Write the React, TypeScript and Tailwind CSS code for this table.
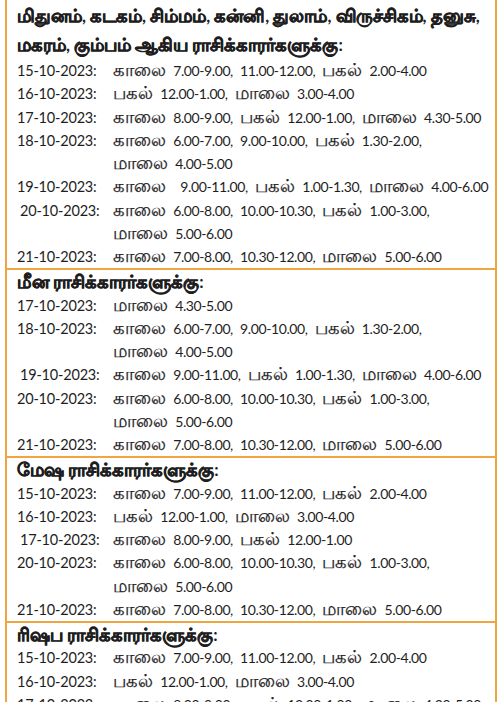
import React from 'react';

type Row = { date: string; lines: string[]; indent?: boolean };
type Section = { title: string[]; rows: Row[] };

const sections: Section[] = [
    {
        title: [
            'மிதுனம், கடகம், சிம்மம், கன்னி, துலாம், விருச்சிகம், தனுசு,',
            'மகரம், கும்பம் ஆகிய ராசிக்காரர்களுக்கு:',
        ],
        rows: [
            { date: '15-10-2023:', lines: ['காலை 7.00-9.00, 11.00-12.00, பகல் 2.00-4.00'] },
            { date: '16-10-2023:', lines: ['பகல் 12.00-1.00, மாலை 3.00-4.00'] },
            { date: '17-10-2023:', lines: ['காலை 8.00-9.00, பகல் 12.00-1.00, மாலை 4.30-5.00'] },
            { date: '18-10-2023:', lines: ['காலை 6.00-7.00, 9.00-10.00, பகல் 1.30-2.00,', 'மாலை 4.00-5.00'] },
            { date: '19-10-2023:', lines: ['காலை  9.00-11.00, பகல் 1.00-1.30, மாலை 4.00-6.00'] },
            { date: '20-10-2023:', lines: ['காலை 6.00-8.00, 10.00-10.30, பகல் 1.00-3.00,', 'மாலை 5.00-6.00'], indent: true },
            { date: '21-10-2023:', lines: ['காலை 7.00-8.00, 10.30-12.00, மாலை 5.00-6.00'] },
        ],
    },
    {
        title: ['மீன ராசிக்காரர்களுக்கு:'],
        rows: [
            { date: '17-10-2023:', lines: ['மாலை 4.30-5.00'] },
            { date: '18-10-2023:', lines: ['காலை 6.00-7.00, 9.00-10.00, பகல் 1.30-2.00,', 'மாலை 4.00-5.00'] },
            { date: '19-10-2023:', lines: ['காலை 9.00-11.00, பகல் 1.00-1.30, மாலை 4.00-6.00'], indent: true },
            { date: '20-10-2023:', lines: ['காலை 6.00-8.00, 10.00-10.30, பகல் 1.00-3.00,', 'மாலை 5.00-6.00'] },
            { date: '21-10-2023:', lines: ['காலை 7.00-8.00, 10.30-12.00, மாலை 5.00-6.00'] },
        ],
    },
    {
        title: ['மேஷ ராசிக்காரர்களுக்கு:'],
        rows: [
            { date: '15-10-2023:', lines: ['காலை 7.00-9.00, 11.00-12.00, பகல் 2.00-4.00'] },
            { date: '16-10-2023:', lines: ['பகல் 12.00-1.00, மாலை 3.00-4.00'] },
            { date: '17-10-2023:', lines: ['காலை 8.00-9.00, பகல் 12.00-1.00'], indent: true },
            { date: '20-10-2023:', lines: ['காலை 6.00-8.00, 10.00-10.30, பகல் 1.00-3.00,', 'மாலை 5.00-6.00'] },
            { date: '21-10-2023:', lines: ['காலை 7.00-8.00, 10.30-12.00, மாலை 5.00-6.00'] },
        ],
    },
    {
        title: ['ரிஷப ராசிக்காரர்களுக்கு:'],
        rows: [
            { date: '15-10-2023:', lines: ['காலை 7.00-9.00, 11.00-12.00, பகல் 2.00-4.00'] },
            { date: '16-10-2023:', lines: ['பகல் 12.00-1.00, மாலை 3.00-4.00'] },
            { date: '17-10-2023:', lines: ['காலை 8.00-9.00, பகல் 12.00-1.00, மாலை 4.30-5.00'] },
            { date: '18-10-2023:', lines: ['காலை 6.00-7.00, 9.00-10.00, பகல் 1.30-2.00,', 'மாலை 4.00-5.00'] },
        ],
    },
];

// Tamil runs are set a size up so they sit like the printed page
const Mixed: React.FC<{ text: string; heading?: boolean }> = ({ text, heading }) => {
    const parts = text.split(/([\u0B80-\u0BFF]+)/);
    return (
        <>
            {parts.map((p, i) =>
                /[\u0B80-\u0BFF]/.test(p) ? (
                    <span
                        key={i}
                        className={
                            heading
                                ? 'text-[18px] leading-none font-bold [-webkit-text-stroke:0.6px_#1e1e1e]'
                                : 'text-[18px] leading-none [-webkit-text-stroke:0.25px_#1e1e1e]'
                        }
                    >
                        {p}
                    </span>
                ) : (
                    <span key={i} className={heading ? '' : 'tracking-[-0.4px]'}>{p}</span>
                )
            )}
        </>
    );
};

export default function App() {
    return (
        <div className="min-h-screen bg-white text-[#1e1e1e] font-['Lato','Noto_Sans',sans-serif]">
            <div className="ml-[5px] w-[492px] border-x-2 border-[#f0a640]">
                {sections.map((section, si) => (
                    <div
                        key={si}
                        className={si === 0 ? 'pt-px' : 'border-t-2 border-[#f0a640]'}
                    >
                        {/* Heading */}
                        <div
                            className={
                                si === 0
                                    ? 'pl-[10px] text-[17px] font-bold leading-[29px]'
                                    : 'pl-[10px] text-[17px] font-bold leading-[23.25px]'
                            }
                        >
                            {section.title.map((t, ti) => (
                                <div key={ti} className="whitespace-nowrap">
                                    <Mixed text={t} heading />
                                </div>
                            ))}
                        </div>

                        {/* Rows */}
                        {section.rows.map((row, ri) => (
                            <div key={ri} className="flex pl-[10px] leading-[23.25px]">
                                <div
                                    className={
                                        row.indent
                                            ? 'w-[96px] shrink-0 pl-[3px] text-[14.5px] tracking-[-0.2px]'
                                            : 'w-[96px] shrink-0 text-[14.5px] tracking-[-0.2px]'
                                    }
                                >
                                    {row.date}
                                </div>
                                <div className="flex flex-col whitespace-pre text-[14px] [word-spacing:4px]">
                                    {row.lines.map((l, li) => (
                                        <div key={li} className="h-[23.25px]">
                                            <Mixed text={l} />
                                        </div>
                                    ))}
                                </div>
                            </div>
                        ))}
                    </div>
                ))}
            </div>
        </div>
    );
}
